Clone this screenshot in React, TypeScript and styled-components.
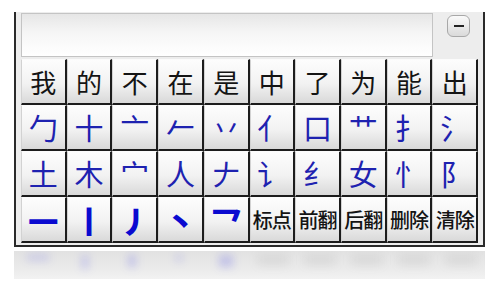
import React from "react";
import styled, { createGlobalStyle } from "styled-components";

const GlobalStyle = createGlobalStyle`
  body {
    margin: 0;
    background: #fff;
    font-family: "Noto Sans CJK SC", "Noto Sans", sans-serif;
  }
`;

type Kind = "word" | "radical" | "stroke" | "action";

const rows: { label: string; kind: Kind }[][] = [
  ["我", "的", "不", "在", "是", "中", "了", "为", "能", "出"].map((label) => ({ label, kind: "word" as Kind })),
  ["勹", "十", "亠", "𠂉", "丷", "亻", "口", "艹", "扌", "氵"].map((label) => ({ label, kind: "radical" as Kind })),
  ["土", "木", "宀", "人", "𠂇", "讠", "纟", "女", "忄", "阝"].map((label) => ({ label, kind: "radical" as Kind })),
  [
    ...["一", "丨", "丿", "丶", "乛"].map((label) => ({ label, kind: "stroke" as Kind })),
    ...["标点", "前翻", "后翻", "删除", "清除"].map((label) => ({ label, kind: "action" as Kind })),
  ],
];

// blurred mirror of the last row: blue smudges under the stroke keys
const reflection = [
  { w: 22, h: 5, blue: true },
  { w: 6, h: 14, blue: true },
  { w: 8, h: 12, blue: true },
  { w: 6, h: 6, blue: true },
  { w: 14, h: 12, blue: true },
  { w: 30, h: 10, blue: false },
  { w: 30, h: 10, blue: false },
  { w: 30, h: 10, blue: false },
  { w: 30, h: 10, blue: false },
  { w: 30, h: 10, blue: false },
];

export default function App() {
  return <Page>
    <GlobalStyle />
    <Frame>
      <TopBar>
        <Input />
        <MinimizeButton><Dash /></MinimizeButton>
      </TopBar>
      <Keys>
        {rows.flat().map((key, i) => (
          <Key key={i} $kind={key.kind}>{key.label}</Key>
        ))}
      </Keys>
    </Frame>
    <Reflection aria-hidden>
      {reflection.map((b, i) => (
        <Slot key={i}>
          <Smudge $blue={b.blue} style={{ width: b.w, height: b.h }} />
        </Slot>
      ))}
    </Reflection>
  </Page>;
}

const Page = styled.div`
  padding: 12px 0 0 14px;
  width: 471px;
`;

const Frame = styled.div`
  background: #ededed;
  border: 2px solid #2a2a2a;
  border-top: none;
  padding: 1px 6px 2px 4px;
`;

const TopBar = styled.div`
  display: flex;
  align-items: flex-start;
  margin-left: 1px;
  margin-bottom: 2px;
`;

const Input = styled.div`
  width: 410px;
  height: 42px;
  border: 1px solid #c4c4c4;
  background: linear-gradient(#e6e6e6, #f6f6f6 45%, #ffffff);
`;

const MinimizeButton = styled.div`
  margin: 2px 0 0 14px;
  width: 21px;
  height: 20px;
  border: 1px solid #a8a8a8;
  border-radius: 6px;
  background: linear-gradient(#fafafa, #dadada);
  display: flex;
  align-items: center;
  justify-content: center;
`;

const Dash = styled.div`
  width: 10px;
  height: 2px;
  background: #222;
`;

const Keys = styled.div`
  display: grid;
  grid-template-columns: repeat(10, 1fr);
  grid-auto-rows: 46px;
  width: 457px;
  margin-left: 1px;
`;

const colors: Record<Kind, string> = {
  word: "#141414",
  radical: "#1e22b0",
  stroke: "#0a0ad0",
  action: "#141414",
};

const sizes: Record<Kind, string> = {
  word: "26px",
  radical: "29px",
  stroke: "30px",
  action: "20px",
};

const Key = styled.div<{ $kind: Kind }>`
  box-sizing: border-box;
  display: flex;
  align-items: center;
  justify-content: center;
  overflow: hidden;
  white-space: nowrap;
  border-top: 1px solid #fbfbfb;
  border-left: 1px solid #d2d2d2;
  border-right: 2px solid #1c1c1c;
  border-bottom: 2px solid #1c1c1c;
  background: linear-gradient(#fdfdfd, #f2f2f2 55%, #d9d9d9);
  color: ${(p) => colors[p.$kind]};
  font-size: ${(p) => sizes[p.$kind]};
  font-weight: ${(p) => (p.$kind === "stroke" ? 900 : p.$kind === "action" ? 500 : 400)};
  letter-spacing: ${(p) => (p.$kind === "action" ? "-1px" : "0")};
  line-height: 1;
`;

const Reflection = styled.div`
  margin-top: 4px;
  height: 28px;
  display: grid;
  grid-template-columns: repeat(10, 1fr);
  overflow: hidden;
  background: linear-gradient(#e2e2e2, #eaeaea 60%, #f2f2f2);
`;

const Slot = styled.div`
  display: flex;
  justify-content: center;
  align-items: flex-start;
  padding-top: 4px;
`;

const Smudge = styled.div<{ $blue: boolean }>`
  background: ${(p) => (p.$blue ? "rgba(60, 60, 230, 0.22)" : "rgba(120, 120, 120, 0.12)")};
  filter: blur(4px);
`;
